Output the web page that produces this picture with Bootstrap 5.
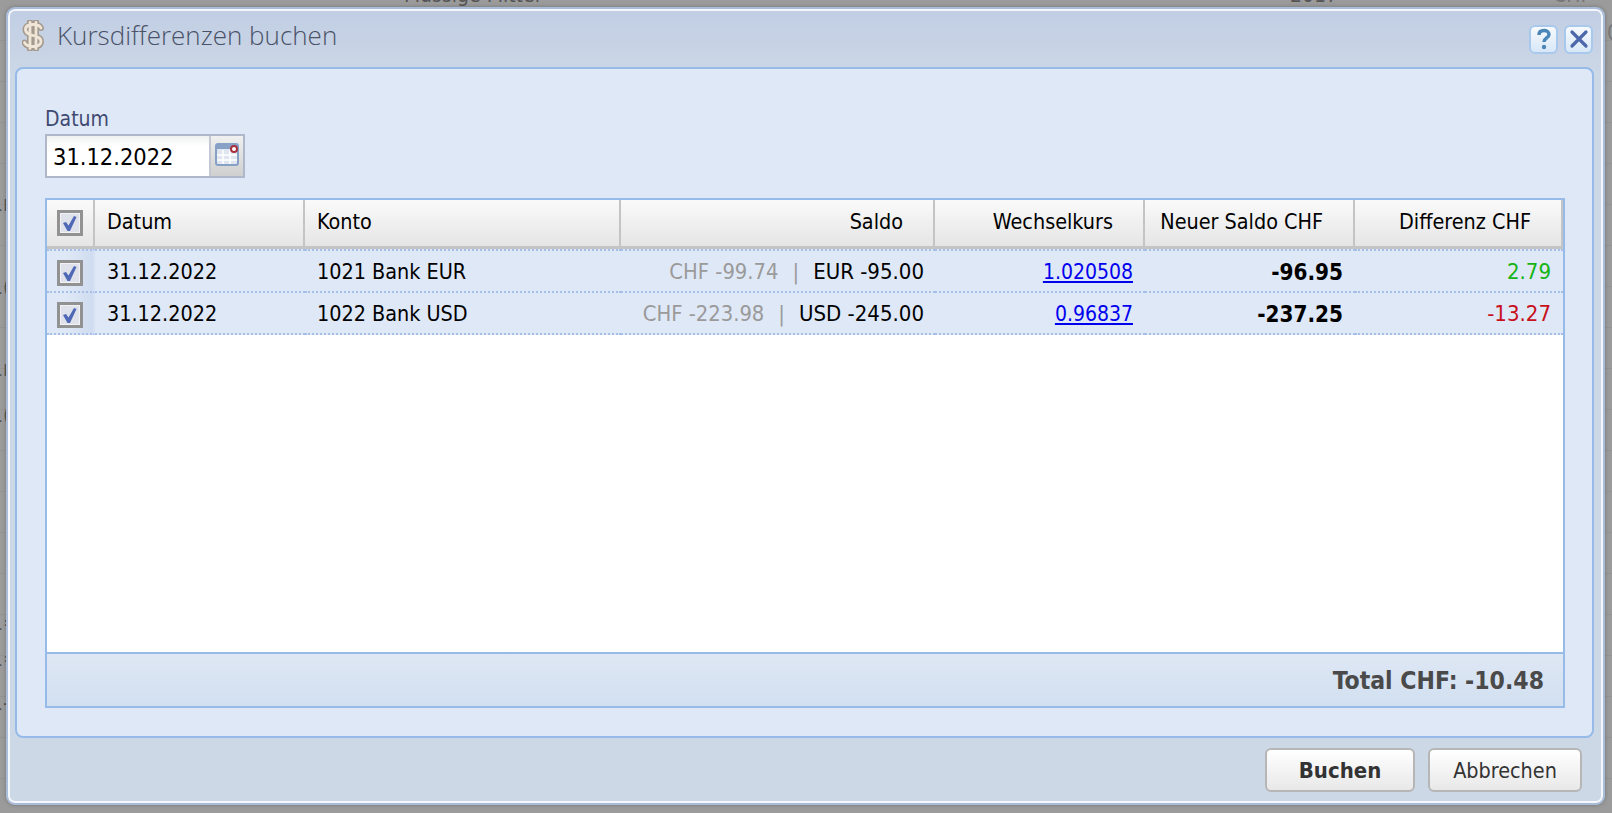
<!DOCTYPE html>
<html lang="de">
<head>
<meta charset="utf-8">
<title>Kursdifferenzen buchen</title>
<link href="https://cdn.jsdelivr.net/npm/bootstrap@5.3.0/dist/css/bootstrap.min.css" rel="stylesheet">
<style>
html,body{height:100%;margin:0;overflow:hidden}
body{position:relative;background:#9b9b9b repeating-linear-gradient(180deg,#9b9b9b 0,#9b9b9b 40px,#949494 40px,#949494 41px);font-family:"DejaVu Sans Condensed","DejaVu Sans",sans-serif;font-size:21.4px;color:#000;padding:7px 7px 8px 6px}
.back-txt{position:absolute;font-size:21px;line-height:1;color:#555;white-space:nowrap}
.back-a{left:404px;top:-15px}
.back-b{left:1290px;top:-15px}
.back-c{left:1553px;top:-15px;color:#777}
.back-l{left:-9px}
.back-r{left:1607px;top:23px;color:#777}
.by1{top:194px}.by2{top:277px}.by3{top:359px}.by4{top:405px}.by5{top:613px}.by6{top:649px}.by7{top:693px}
.dlg-win{position:relative;height:798px;border:2px solid #a9bcd9;border-radius:9px;box-shadow:inset 0 0 0 2px #f4f7fb,0 0 4px rgba(0,0,0,.25);background:linear-gradient(180deg,#c1cde3 0,#ccd8e6 66px,#ccd8e6 100%);padding:2px 9px 0 7px}
.dlg-head{height:56px;flex:none;padding:0 0 8px 7px}
.dlg-title{font-family:"Open Sans",sans-serif;font-weight:300;font-size:26px;color:#4a5268;margin-left:13px}
.dlg-tools{gap:6px;margin:8px 1px 0 auto}
.dlg-tool{width:29px;height:29px;border:2px solid #a9c9ec;border-radius:6px;background:linear-gradient(180deg,#f7fafe,#d8e7f7)}
.dlg-panel{height:671px;flex:none;border:2px solid #97bbe8;border-radius:8px;background:#dfe8f6;padding:35px 27px 0 28px}
.fld-label{font-size:21px;color:#3f4a72;line-height:30px}
.fld-box{width:200px;height:44px;border:2px solid #b0b7cb;background:#fff}
.fld-input{width:162px;font-size:23.400px;line-height:42px;padding-left:6px;background:linear-gradient(180deg,#eef1ef 0,#fff 10px)}
.fld-btn{width:34px;border-left:2px solid #c3c8d2;background:linear-gradient(180deg,#f0f0f0,#cfcfcf);padding-bottom:4px}
.grid-box{height:510px;margin-top:20px;border:2px solid #97bbe8;background:#fff}
.grid-tbl{table-layout:fixed;width:1516px;border-collapse:separate;border-spacing:0;margin:0}
.w-a{width:48px}.w-b{width:210px}.w-c{width:316px}.w-d{width:314px}.w-e{width:210px}.w-f{width:210px}.w-g{width:208px}
.grid-tbl th{height:49px;font-weight:400;padding:0 12px 3px;border-right:2px solid #c4c4c4;border-bottom:3px solid #c4c4c4;background:linear-gradient(180deg,#fafafa,#e5e5e5);line-height:1;vertical-align:middle;white-space:nowrap}
.grid-tbl td{height:42px;padding:2px 12px 0;background:#dfe8f6;border-top:0;border-bottom:2px dotted #a6bfe9;vertical-align:middle;line-height:1;white-space:nowrap}
.grid-tbl tbody tr:first-child td{border-top:2px dotted #a6bfe9;height:44px}
.grid-tbl td.cell-check{background:linear-gradient(90deg,#dfe8f6 40%,#cfdcf0);padding:4px 0 0;text-align:center;border-right:2px solid #d5e0f2}
.grid-tbl th.cell-check{padding:0;text-align:center}
.grid-tbl th.pad-r{padding-right:30px}
.grid-tbl th.pad-m{padding-right:30px}
.grid-tbl td.cell-end{padding-right:12px;font-size:22px}
.grid-tbl td.cell-link{font-size:21px}
.grid-tbl td.cell-bold{font-size:22.300px}
.grid-tbl td.cell-saldo{padding-right:11px}
.muted-part{color:#9a9a9a;font-size:21.800px}
.sep-part{color:#9a9a9a;margin:0 14px 0 14px}
.rate-link{color:#0000ee}
.pos-val{color:#14b414}
.neg-val{color:#c8101c}
.grid-foot{height:54px;flex:none;border-top:2px solid #97bbe8;background:linear-gradient(180deg,#dee7f4,#d2e0f1);font-weight:700;font-size:24.500px;color:#4a4a4a;padding:2px 19px 0 0}
.grid-fill{flex:1 1 auto;min-height:0}
.dlg-actions{flex:1 1 auto;padding:10px 12px 0 0;gap:13px}
.act-btn{height:44px;border:2px solid #b6b6b6;border-radius:6px;background:linear-gradient(180deg,#fff,#e8e8e8);font-size:21.400px;color:#333;padding:1px 0 0;line-height:1}
.act-main{width:150px;font-weight:700;font-size:22px}
.act-alt{width:154px}
.chk-svg{display:block;margin:0 auto}
</style>
</head>
<body>
<span class="back-txt back-a">Flüssige Mittel</span>
<span class="back-txt back-b">2017</span>
<span class="back-txt back-c">CHF</span>
<span class="back-txt back-l by1">1r</span>
<span class="back-txt back-l by2">1(</span>
<span class="back-txt back-l by3">1r</span>
<span class="back-txt back-l by4">1(</span>
<span class="back-txt back-l by5">1=</span>
<span class="back-txt back-l by6">1=</span>
<span class="back-txt back-l by7">1-</span>
<span class="back-txt back-r">0</span>
<div class="dlg-win d-flex flex-column">
  <div class="dlg-head d-flex align-items-center">
    <svg width="22" height="31" viewBox="0 0 22 31" aria-hidden="true"><g fill="none"><path d="M19 8C18 5.500 15 4.500 11 4.500 6 4.500 3.500 6.500 3.500 9.500c0 7.500 15.500 4.500 15.500 12 0 3.500-3 5-8 5-4.500 0-7.500-1.500-8.500-4M8 2v27M14 2v27" stroke="#a59a8e" stroke-width="6" stroke-linecap="round"/><path d="M19 8C18 5.500 15 4.500 11 4.500 6 4.500 3.500 6.500 3.500 9.500c0 7.500 15.500 4.500 15.500 12 0 3.500-3 5-8 5-4.500 0-7.500-1.500-8.500-4M8 2.500v26M14 2.500v26" stroke="#efe6d8" stroke-width="2.800" stroke-linecap="round"/></g></svg>
    <span class="dlg-title">Kursdifferenzen buchen</span>
    <div class="dlg-tools d-flex">
      <div class="dlg-tool d-flex align-items-center justify-content-center"><svg width="18" height="22" viewBox="0 0 18 22"><path d="M4 7c0-3 2.200-4.500 5-4.500S14 4 14 6.500c0 3.500-5 3.500-5 7.500" fill="none" stroke="#4a86b8" stroke-width="3.500"/><circle cx="9" cy="19" r="2.200" fill="#4a86b8"/></svg></div>
      <div class="dlg-tool d-flex align-items-center justify-content-center"><svg width="20" height="20" viewBox="0 0 20 20"><path d="M3 3l14 14M17 3L3 17" stroke="#4c68ab" stroke-width="3.200" stroke-linecap="round"/></svg></div>
    </div>
  </div>
  <div class="dlg-panel">
    <div class="fld-label">Datum</div>
    <div class="fld-box d-flex">
      <div class="fld-input">31.12.2022</div>
      <div class="fld-btn d-flex align-items-center justify-content-center"><svg width="26" height="24" viewBox="0 0 26 24"><rect x="2" y="2" width="22" height="21" rx="2" fill="#dfe6f0" stroke="#87a1c6" stroke-width="2"/><rect x="2" y="2" width="22" height="5" fill="#87a1c6"/><path d="M9 8v14M16 8v14M3 13h20M3 18h20" stroke="#fff" stroke-width="1.500"/><circle cx="20" cy="7" r="3" fill="#fff" stroke="#a8303c" stroke-width="2"/></svg></div>
    </div>
    <div class="grid-box d-flex flex-column">
      <div class="grid-fill">
        <table class="grid-tbl">
          <colgroup><col class="w-a"><col class="w-b"><col class="w-c"><col class="w-d"><col class="w-e"><col class="w-f"><col class="w-g"></colgroup>
          <thead><tr>
            <th class="cell-check"><svg class="chk-svg" width="26" height="26" viewBox="0 0 26 26"><rect x="1.500" y="1.500" width="23" height="23" fill="#e9ebf1" stroke="#929292" stroke-width="3"/><rect x="3.500" y="3.500" width="19" height="19" fill="#dfe2ea" stroke="#f2f2f4" stroke-width="1"/><path d="M6 13l3-1 2.500 3.500L17 6l2.500 1-6.500 14h-2.500z" fill="#5069b6"/></svg></th>
            <th>Datum</th><th>Konto</th>
            <th class="text-end pad-r">Saldo</th>
            <th class="text-end pad-m">Wechselkurs</th>
            <th class="text-end pad-r">Neuer Saldo CHF</th>
            <th class="text-end pad-r">Differenz CHF</th>
          </tr></thead>
          <tbody>
            <tr>
              <td class="cell-check"><svg class="chk-svg" width="26" height="26" viewBox="0 0 26 26"><rect x="1.500" y="1.500" width="23" height="23" fill="#e9ebf1" stroke="#929292" stroke-width="3"/><rect x="3.500" y="3.500" width="19" height="19" fill="#dfe2ea" stroke="#f2f2f4" stroke-width="1"/><path d="M6 13l3-1 2.500 3.500L17 6l2.500 1-6.500 14h-2.500z" fill="#5069b6"/></svg></td>
              <td>31.12.2022</td><td>1021 Bank EUR</td>
              <td class="text-end cell-end cell-saldo"><span class="muted-part">CHF -99.74</span><span class="sep-part">|</span>EUR -95.00</td>
              <td class="text-end cell-end cell-link"><a class="rate-link" href="#">1.020508</a></td>
              <td class="text-end cell-end cell-bold fw-bold">-96.95</td>
              <td class="text-end cell-end pos-val">2.79</td>
            </tr>
            <tr>
              <td class="cell-check"><svg class="chk-svg" width="26" height="26" viewBox="0 0 26 26"><rect x="1.500" y="1.500" width="23" height="23" fill="#e9ebf1" stroke="#929292" stroke-width="3"/><rect x="3.500" y="3.500" width="19" height="19" fill="#dfe2ea" stroke="#f2f2f4" stroke-width="1"/><path d="M6 13l3-1 2.500 3.500L17 6l2.500 1-6.500 14h-2.500z" fill="#5069b6"/></svg></td>
              <td>31.12.2022</td><td>1022 Bank USD</td>
              <td class="text-end cell-end cell-saldo"><span class="muted-part">CHF -223.98</span><span class="sep-part">|</span>USD -245.00</td>
              <td class="text-end cell-end cell-link"><a class="rate-link" href="#">0.96837</a></td>
              <td class="text-end cell-end cell-bold fw-bold">-237.25</td>
              <td class="text-end cell-end neg-val">-13.27</td>
            </tr>
          </tbody>
        </table>
      </div>
      <div class="grid-foot d-flex align-items-center justify-content-end">Total CHF: -10.48</div>
    </div>
  </div>
  <div class="dlg-actions d-flex align-items-start justify-content-end">
    <button type="button" class="act-btn act-main">Buchen</button>
    <button type="button" class="act-btn act-alt">Abbrechen</button>
  </div>
</div>
</body>
</html>
